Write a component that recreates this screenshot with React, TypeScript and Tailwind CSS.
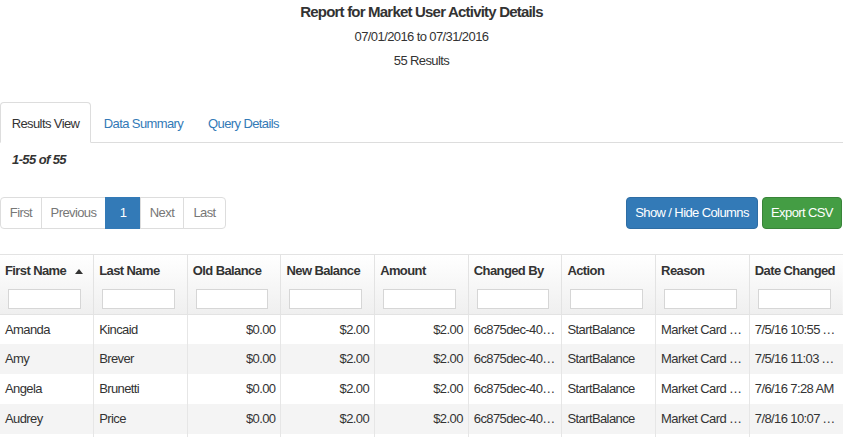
import React from "react";

const COLUMNS = [
  { key: "first", label: "First Name", sorted: true },
  { key: "last", label: "Last Name" },
  { key: "oldBal", label: "Old Balance", right: true },
  { key: "newBal", label: "New Balance", right: true },
  { key: "amount", label: "Amount", right: true },
  { key: "changedBy", label: "Changed By" },
  { key: "action", label: "Action" },
  { key: "reason", label: "Reason" },
  { key: "date", label: "Date Changed" },
];

type Row = Record<string, string>;

const ROWS: Row[] = [
  {
    first: "Amanda",
    last: "Kincaid",
    oldBal: "$0.00",
    newBal: "$2.00",
    amount: "$2.00",
    changedBy: "6c875dec-40a1-4c2e-9b1f-7d3e",
    action: "StartBalance",
    reason: "Market Card Start Balance",
    date: "7/5/16 10:55 AM",
  },
  {
    first: "Amy",
    last: "Brever",
    oldBal: "$0.00",
    newBal: "$2.00",
    amount: "$2.00",
    changedBy: "6c875dec-40a1-4c2e-9b1f-7d3e",
    action: "StartBalance",
    reason: "Market Card Start Balance",
    date: "7/5/16 11:03 AM",
  },
  {
    first: "Angela",
    last: "Brunetti",
    oldBal: "$0.00",
    newBal: "$2.00",
    amount: "$2.00",
    changedBy: "6c875dec-40a1-4c2e-9b1f-7d3e",
    action: "StartBalance",
    reason: "Market Card Start Balance",
    date: "7/6/16 7:28 AM",
  },
  {
    first: "Audrey",
    last: "Price",
    oldBal: "$0.00",
    newBal: "$2.00",
    amount: "$2.00",
    changedBy: "6c875dec-40a1-4c2e-9b1f-7d3e",
    action: "StartBalance",
    reason: "Market Card Start Balance",
    date: "7/8/16 10:07 AM",
  },
  {
    first: "Barbara",
    last: "Collins",
    oldBal: "$0.00",
    newBal: "$2.00",
    amount: "$2.00",
    changedBy: "6c875dec-40a1-4c2e-9b1f-7d3e",
    action: "StartBalance",
    reason: "Market Card Start Balance",
    date: "7/8/16 11:42 AM",
  },
];

const PAGES = [
  { label: "First", w: "w-[42px]", cls: "rounded-l-[4px]" },
  { label: "Previous", w: "w-[65px]", cls: "-ml-px" },
  { label: "1", w: "w-[36px]", cls: "-ml-px", active: true },
  { label: "Next", w: "w-[44px]", cls: "-ml-px" },
  { label: "Last", w: "w-[43px]", cls: "-ml-px rounded-r-[4px]" },
];

function SortUp() {
  return (
    <svg width="8" height="5" viewBox="0 0 8 5" className="ml-[9px] inline-block" aria-hidden>
      <path d="M0 5 L4 0 L8 5 Z" fill="#333" />
    </svg>
  );
}

export default function App() {
  return (
    <div className="min-h-screen bg-white text-[13px] tracking-[-0.6px] text-[#333] font-['Liberation_Sans',Arial,sans-serif]">
      <div className="pt-[2px] text-center">
        <h1 className="text-[15px] font-bold leading-[20px] tracking-[-0.8px]">
          Report for Market User Activity Details
        </h1>
        <p className="mt-[5px] leading-[20px]">07/01/2016 to 07/31/2016</p>
        <p className="mt-[4px] leading-[20px]">55 Results</p>
      </div>

      <ul className="mt-[31px] flex border-b border-[#ddd]">
        <li className="-mb-px">
          <span className="block w-[91px] rounded-t-[4px] border border-[#ddd] border-b-transparent bg-white pt-[11px] pb-[8px] text-center leading-[20px]">
            Results View
          </span>
        </li>
        <li className="ml-[2px]">
          <a className="block w-[101px] pt-[12px] pb-[8px] text-center leading-[20px] text-[#337ab7]" href="#">
            Data Summary
          </a>
        </li>
        <li className="ml-[2px]">
          <a className="block w-[95px] pt-[12px] pb-[8px] text-center leading-[20px] text-[#337ab7]" href="#">
            Query Details
          </a>
        </li>
      </ul>

      <p className="mt-[7px] pl-[12px] font-bold italic leading-[20px]">1-55 of 55</p>

      <div className="mt-[27px] flex items-center justify-between pr-[1px]">
        <div className="flex h-[32px] text-[#777]">
          {PAGES.map((p) => (
            <span
              key={p.label}
              className={`flex items-center justify-center border ${p.w} ${p.cls} ${
                p.active ? "border-[#337ab7] bg-[#337ab7] text-white" : "border-[#ddd] bg-white"
              }`}
            >
              {p.label}
            </span>
          ))}
        </div>
        <div className="flex gap-[4px]">
          <button className="h-[32px] w-[132px] rounded-[4px] border border-[#2e6da4] bg-[#337ab7] text-white">
            Show / Hide Columns
          </button>
          <button className="h-[32px] w-[80px] rounded-[4px] border border-[#398439] bg-[#449d44] text-white">
            Export CSV
          </button>
        </div>
      </div>

      <table className="mt-[25px] w-full table-fixed border-collapse">
        <thead>
          <tr className="bg-gradient-to-b from-white to-[#efefef]">
            {COLUMNS.map((c) => (
              <th
                key={c.key}
                className="border border-[#e3e3e3] px-[5px] pt-[6px] pb-[5px] text-left align-top font-bold first:border-l-0 last:border-r-0"
              >
                <div className="flex items-center whitespace-nowrap leading-[20px]">
                  {c.label}
                  {c.sorted && <SortUp />}
                </div>
                <input
                  type="text"
                  className="mt-[8px] mx-[3px] block h-[20px] w-[calc(100%-10px)] border border-[#d6d6d6] bg-white"
                />
              </th>
            ))}
          </tr>
        </thead>
        <tbody>
          {ROWS.map((r, i) => (
            <tr key={i} className={i % 2 === 1 ? "bg-[#f4f4f4]" : "bg-white"}>
              {COLUMNS.map((c) => (
                <td
                  key={c.key}
                  className={`h-[29.75px] truncate border-x border-[#e6e6e6] px-[5px] leading-[20px] first:border-l-0 last:border-r-0 ${
                    c.right ? "text-right" : "text-left"
                  }`}
                >
                  {r[c.key]}
                </td>
              ))}
            </tr>
          ))}
        </tbody>
      </table>
    </div>
  );
}
